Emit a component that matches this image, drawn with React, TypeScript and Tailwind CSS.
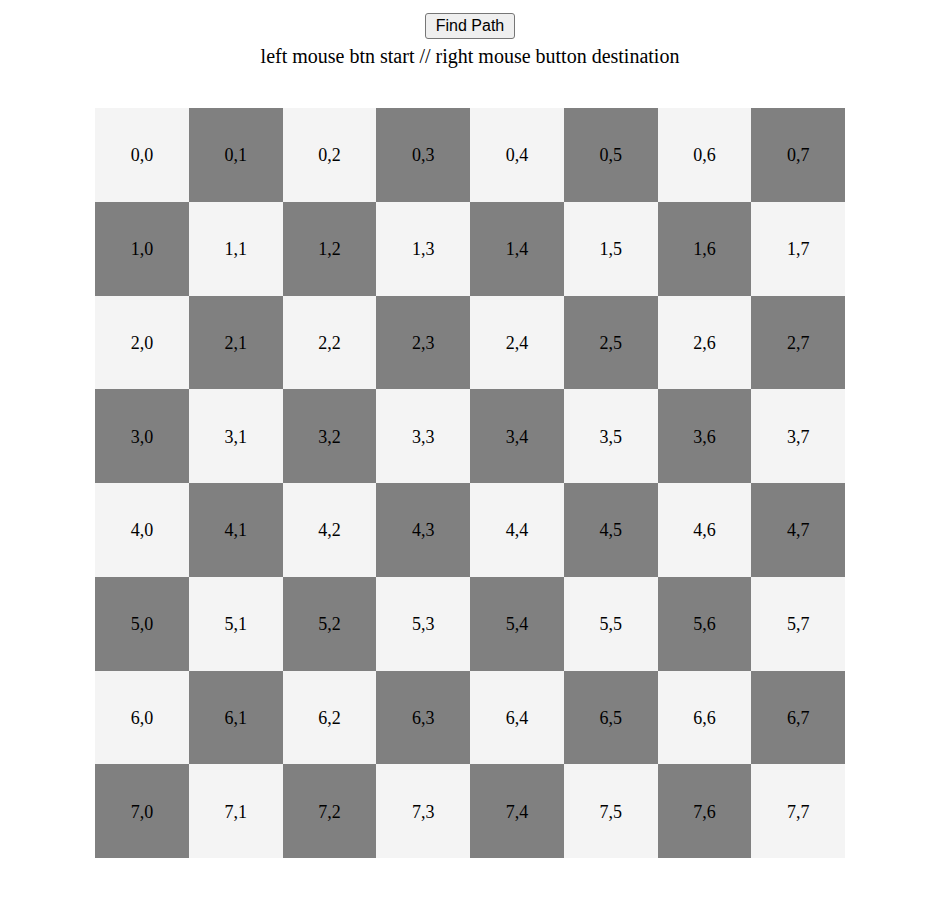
export default function App() {
  const rows = Array.from({ length: 8 }, (_, r) => r);
  const cols = Array.from({ length: 8 }, (_, c) => c);

  return (
    <div className="min-h-[900px] bg-white pl-[8px] text-black font-['Liberation_Serif',serif]">
      <div className="flex flex-col items-center pt-[13px]">
        <button className="h-[26px] w-[90px] rounded-[3px] border border-[#767676] bg-[#efefef] text-[16px] leading-none text-black font-['Liberation_Sans',Arial,sans-serif]">
          Find Path
        </button>
        <p className="mt-[5px] text-[20px] leading-[24px]">
          left mouse btn start // right mouse button destination
        </p>
        <div className="mt-[40px] grid w-[750px] grid-cols-8">
          {rows.map((r) =>
            cols.map((c) => (
              <div
                key={`${r}-${c}`}
                className={`flex h-[93.75px] items-center justify-center pt-[2px] text-[18px] ${
                  (r + c) % 2 === 0 ? "bg-[#f4f4f4]" : "bg-[#808080]"
                }`}
              >
                {r},{c}
              </div>
            ))
          )}
        </div>
      </div>
    </div>
  );
}
